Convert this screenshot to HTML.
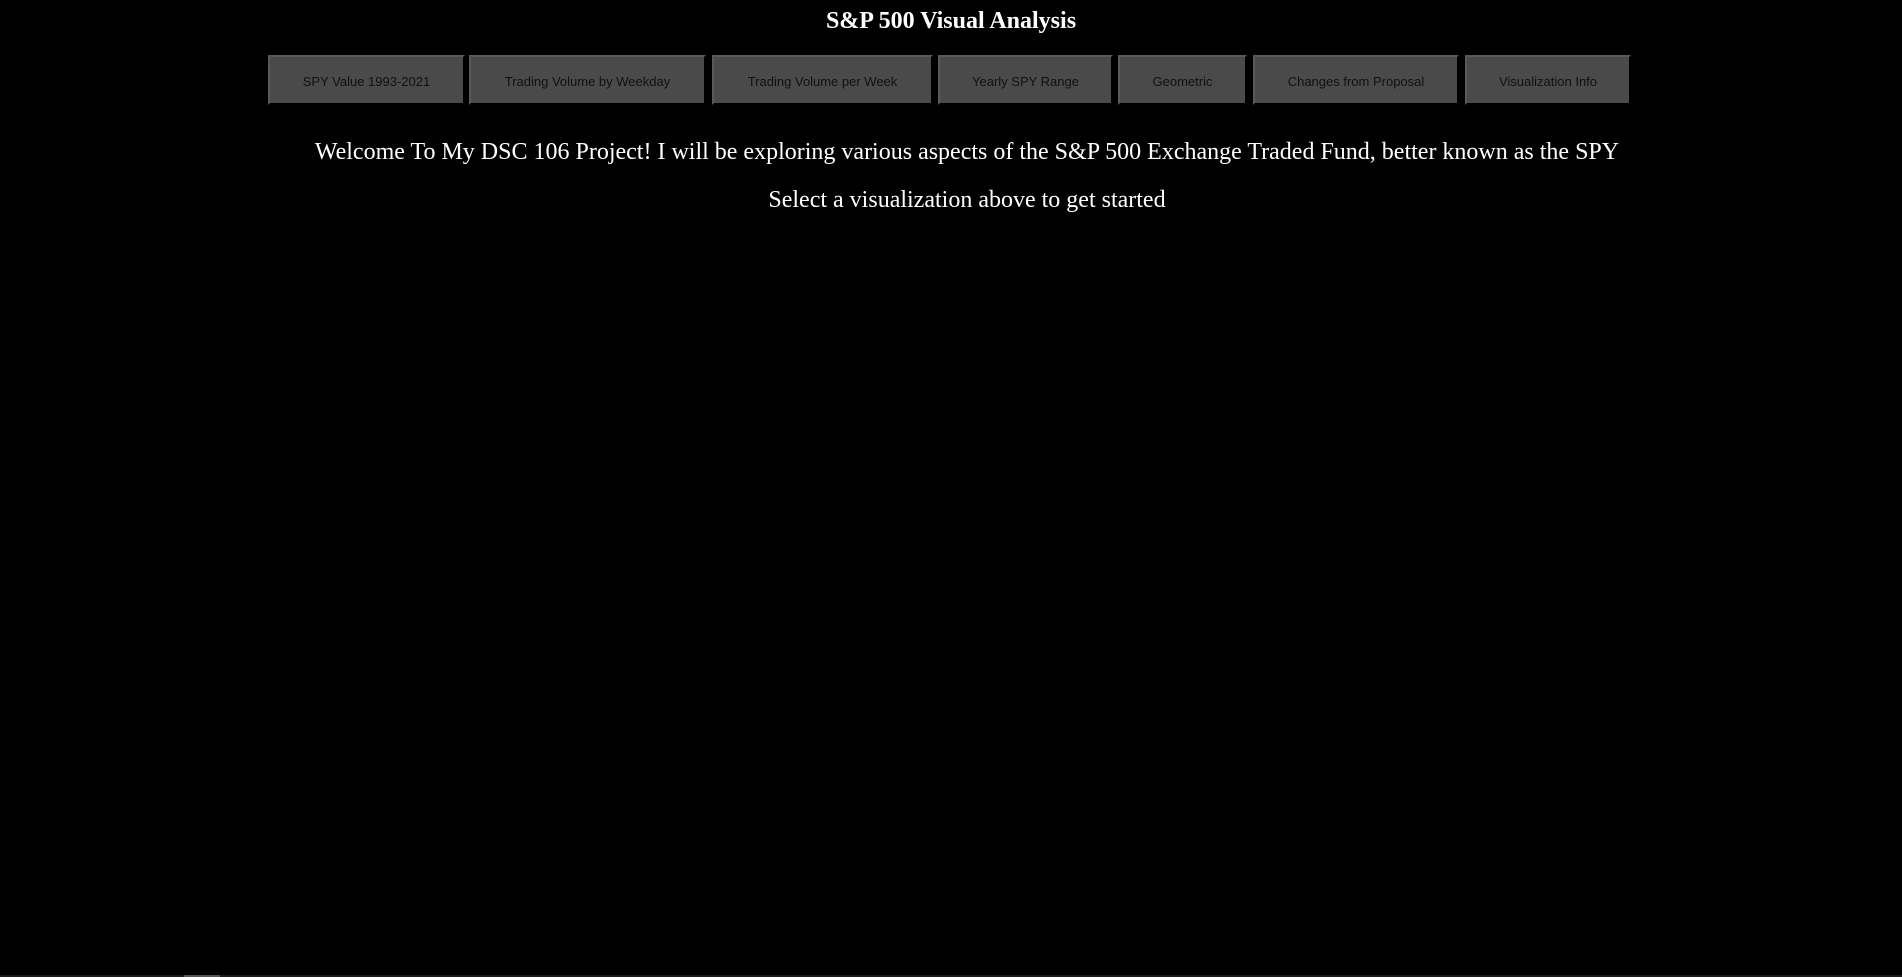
<!DOCTYPE html>
<html><head><meta charset="utf-8"><style>
html,body{margin:0;padding:0;background:#000;width:1902px;height:977px;overflow:hidden;position:relative}
h1{position:absolute;top:8px;left:0;width:1902px;margin:0;text-align:center;font:bold 24px "Liberation Serif",serif;color:#fff}
.b{position:absolute;top:55px;height:50px;box-sizing:border-box;background:#4a4a4a;border:2px outset #3a3a3a;border-color:#5a5a5a #222 #222 #5a5a5a;color:#111;font:13px "Liberation Sans",sans-serif;display:flex;align-items:center;justify-content:center;padding-top:2px}
p{position:absolute;left:16px;width:1902px;margin:0;text-align:center;font:24px "Liberation Serif",serif;color:#fff}
.sb{position:absolute;left:0;bottom:0;width:1902px;height:2px;background:#1c1c1c}
.th{position:absolute;left:184px;bottom:0;width:36px;height:2px;background:#555}
</style></head><body>
<h1>S&amp;P 500 Visual Analysis</h1>
<div class="b" style="left:268px;width:197px">SPY Value 1993-2021</div>
<div class="b" style="left:469px;width:237px">Trading Volume by Weekday</div>
<div class="b" style="left:712px;width:221px">Trading Volume per Week</div>
<div class="b" style="left:938px;width:175px">Yearly SPY Range</div>
<div class="b" style="left:1118px;width:129px">Geometric</div>
<div class="b" style="left:1253px;width:206px">Changes from Proposal</div>
<div class="b" style="left:1465px;width:166px">Visualization Info</div>
<p style="top:139px">Welcome To My DSC 106 Project! I will be exploring various aspects of the S&amp;P 500 Exchange Traded Fund, better known as the SPY</p>
<p style="top:187px">Select a visualization above to get started</p>
<div class="sb"></div><div class="th"></div>
</body></html>
